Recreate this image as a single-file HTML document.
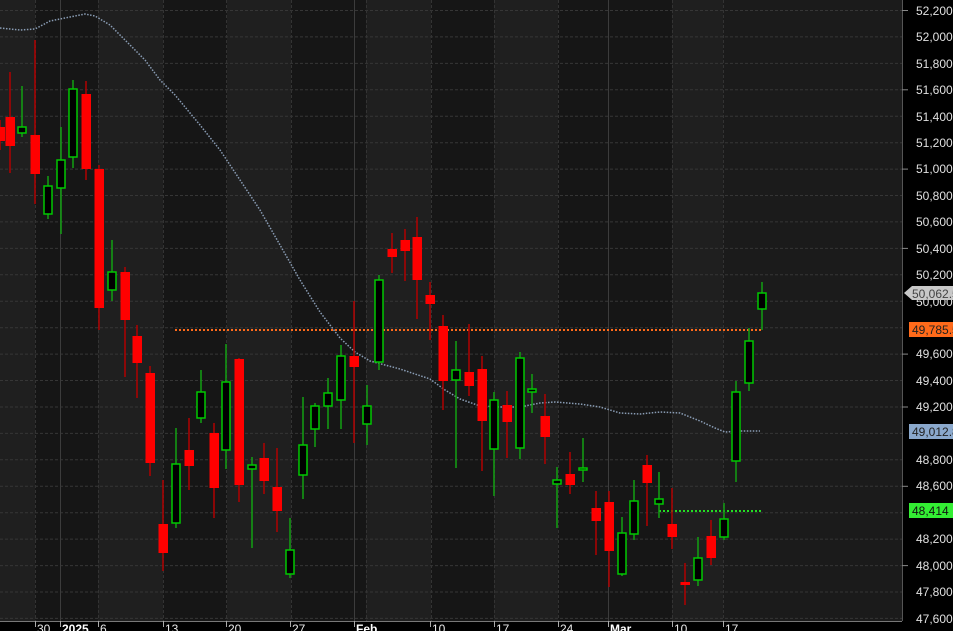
<!DOCTYPE html>
<html><head><meta charset="utf-8"><style>
html,body{margin:0;padding:0;background:#000;width:953px;height:631px;overflow:hidden}
svg{display:block}
text{font-family:"Liberation Sans",sans-serif}
</style></head><body>
<svg width="953" height="631" viewBox="0 0 953 631" xmlns="http://www.w3.org/2000/svg">
<rect x="0" y="0" width="953" height="631" fill="#000"/>
<!-- bands -->
<g>
<rect x="0" y="0" width="35" height="621" fill="#1f1f1f"/>
<rect x="35" y="0" width="63" height="621" fill="#161616"/>
<rect x="98" y="0" width="65" height="621" fill="#1f1f1f"/>
<rect x="163" y="0" width="64" height="621" fill="#161616"/>
<rect x="227" y="0" width="64" height="621" fill="#1f1f1f"/>
<rect x="291" y="0" width="75" height="621" fill="#161616"/>
<rect x="366" y="0" width="65" height="621" fill="#1f1f1f"/>
<rect x="431" y="0" width="63" height="621" fill="#161616"/>
<rect x="494" y="0" width="64" height="621" fill="#1f1f1f"/>
<rect x="558" y="0" width="114" height="621" fill="#161616"/>
<rect x="672" y="0" width="51" height="621" fill="#1f1f1f"/>
<rect x="723" y="0" width="179" height="621" fill="#1b1b1b"/>
</g>
<!-- horizontal grid -->
<g stroke="#363636" stroke-width="1" stroke-dasharray="3,2">
<line x1="0" y1="10.5" x2="902" y2="10.5"/><line x1="0" y1="36.9" x2="902" y2="36.9"/>
<line x1="0" y1="63.4" x2="902" y2="63.4"/><line x1="0" y1="89.8" x2="902" y2="89.8"/>
<line x1="0" y1="116.2" x2="902" y2="116.2"/><line x1="0" y1="142.7" x2="902" y2="142.7"/>
<line x1="0" y1="169.1" x2="902" y2="169.1"/><line x1="0" y1="195.5" x2="902" y2="195.5"/>
<line x1="0" y1="221.9" x2="902" y2="221.9"/><line x1="0" y1="248.4" x2="902" y2="248.4"/>
<line x1="0" y1="274.8" x2="902" y2="274.8"/><line x1="0" y1="301.2" x2="902" y2="301.2"/>
<line x1="0" y1="327.7" x2="902" y2="327.7"/><line x1="0" y1="354.1" x2="902" y2="354.1"/>
<line x1="0" y1="380.5" x2="902" y2="380.5"/><line x1="0" y1="407" x2="902" y2="407"/>
<line x1="0" y1="433.4" x2="902" y2="433.4"/><line x1="0" y1="459.8" x2="902" y2="459.8"/>
<line x1="0" y1="486.3" x2="902" y2="486.3"/><line x1="0" y1="512.7" x2="902" y2="512.7"/>
<line x1="0" y1="539.1" x2="902" y2="539.1"/><line x1="0" y1="565.6" x2="902" y2="565.6"/>
<line x1="0" y1="592" x2="902" y2="592"/><line x1="0" y1="618.4" x2="902" y2="618.4"/>
</g>
<g stroke="#333" stroke-width="1" stroke-dasharray="3,2">
<line x1="35.5" y1="0" x2="35.5" y2="621"/><line x1="98.5" y1="0" x2="98.5" y2="621"/>
<line x1="163.5" y1="0" x2="163.5" y2="621"/><line x1="226.5" y1="0" x2="226.5" y2="621"/>
<line x1="291.5" y1="0" x2="291.5" y2="621"/><line x1="366.5" y1="0" x2="366.5" y2="621"/>
<line x1="431.5" y1="0" x2="431.5" y2="621"/><line x1="494.5" y1="0" x2="494.5" y2="621"/>
<line x1="558.5" y1="0" x2="558.5" y2="621"/><line x1="672.5" y1="0" x2="672.5" y2="621"/>
<line x1="723.5" y1="0" x2="723.5" y2="621"/>
</g>
<g stroke="#3c3c3c" stroke-width="1">
<line x1="60.5" y1="0" x2="60.5" y2="621"/><line x1="354.5" y1="0" x2="354.5" y2="621"/>
<line x1="608.5" y1="0" x2="608.5" y2="621"/>
</g>
<!-- MA line -->
<polyline fill="none" stroke="#8a9db5" stroke-width="1.5" stroke-dasharray="1.5,1.5" points="0,28 20,30 35,29 50,21 70,17 85,14 95,16 110,25 125,40 145,60 160,80 175,95 200,125 220,150 240,180 260,210 280,245 300,280 320,312 340,338 355,352 370,361 400,369 430,379 445,390 460,399 480,406 500,407 520,407 540,403 555,402 580,404 600,407 620,413 640,414 660,412 680,413 700,421 715,428 725,432 740,431 760,431"/>
<!-- level lines -->
<line x1="175" y1="330" x2="762" y2="330" stroke="#ff6a1a" stroke-width="2" stroke-dasharray="2,2"/>
<line x1="659" y1="511" x2="762" y2="511" stroke="#22dd22" stroke-width="2" stroke-dasharray="2,2"/>
<!-- candles -->
<g id="c"></g>
<!-- axis -->
<rect x="902" y="0" width="51" height="631" fill="#000"/>
<line x1="902.5" y1="0" x2="902.5" y2="621" stroke="#555"/>
<rect x="0" y="621" width="953" height="10" fill="#000"/>
<line x1="0" y1="621.5" x2="902" y2="621.5" stroke="#777"/>
<g fill="#e0e0e0" font-size="12">
<text x="916" y="15">52,200</text><text x="916" y="41">52,000</text>
<text x="916" y="68">51,800</text><text x="916" y="94">51,600</text>
<text x="916" y="121">51,400</text><text x="916" y="147">51,200</text>
<text x="916" y="173">51,000</text><text x="916" y="200">50,800</text>
<text x="916" y="226">50,600</text><text x="916" y="253">50,400</text>
<text x="916" y="279">50,200</text><text x="916" y="306">50,000</text>
<text x="916" y="358">49,600</text><text x="916" y="385">49,400</text>
<text x="916" y="411">49,200</text><text x="916" y="464">48,800</text>
<text x="916" y="490">48,600</text><text x="916" y="543">48,200</text>
<text x="916" y="570">48,000</text><text x="916" y="596">47,800</text>
<text x="916" y="623">47,600</text>
</g>
<g stroke="#888"><line x1="902" y1="10.5" x2="908" y2="10.5"/><line x1="902" y1="89.8" x2="908" y2="89.8"/><line x1="902" y1="169.1" x2="908" y2="169.1"/><line x1="902" y1="248.4" x2="908" y2="248.4"/><line x1="902" y1="354.1" x2="908" y2="354.1"/><line x1="902" y1="407" x2="908" y2="407"/><line x1="902" y1="486.3" x2="908" y2="486.3"/><line x1="902" y1="565.6" x2="908" y2="565.6"/></g>
<polygon points="904,293 912,286 953,286 953,300 912,300" fill="#c8c8c8"/>
<text x="912" y="298" font-size="12" fill="#444">50,062.5</text>
<rect x="909" y="322" width="44" height="15" fill="#ff6a1a"/>
<text x="912" y="334" font-size="12" fill="#222">49,785.5</text>
<rect x="909" y="424" width="44" height="15" fill="#8aa8cc"/>
<text x="912" y="436" font-size="12" fill="#222">49,012.8</text>
<rect x="909" y="503" width="44" height="15" fill="#33ee33"/>
<text x="912" y="515" font-size="12" fill="#111">48,414</text>
<g stroke="#aaa"><line x1="35.5" y1="621" x2="35.5" y2="627"/><line x1="60.5" y1="621" x2="60.5" y2="627"/><line x1="98.5" y1="621" x2="98.5" y2="627"/><line x1="163.5" y1="621" x2="163.5" y2="627"/><line x1="226.5" y1="621" x2="226.5" y2="627"/><line x1="290.5" y1="621" x2="290.5" y2="627"/><line x1="354.5" y1="621" x2="354.5" y2="627"/><line x1="430.5" y1="621" x2="430.5" y2="627"/><line x1="494.5" y1="621" x2="494.5" y2="627"/><line x1="558.5" y1="621" x2="558.5" y2="627"/><line x1="608.5" y1="621" x2="608.5" y2="627"/><line x1="672.5" y1="621" x2="672.5" y2="627"/><line x1="723.5" y1="621" x2="723.5" y2="627"/></g>
<g fill="#e8e8e8" font-size="12">
<text x="37" y="633">30</text><text x="62" y="633" font-weight="bold" fill="#fff">2025</text>
<text x="100" y="633">6</text><text x="165" y="633">13</text><text x="228" y="633">20</text>
<text x="292" y="633">27</text><text x="356" y="633" font-weight="bold" fill="#fff">Feb</text>
<text x="432" y="633">10</text><text x="496" y="633">17</text><text x="560" y="633">24</text>
<text x="610" y="633" font-weight="bold" fill="#fff">Mar</text><text x="674" y="633">10</text><text x="725" y="633">17</text>
</g>
</svg>
<script>
var d=[
[0,127,141,120,150,0],[10,117,146,72,173,0],[22,127,133,86,137,1],[35,135,174,40,204,0],
[48,186,214,176,219,1],[61,160,188,127,234,1],[73,89,157,80,168,1],[86,94,169,81,180,0],
[99,169,308,165,330,0],[112,272,290,240,301,1],[125,272,320,267,377,0],[137,336,363,325,398,0],
[150,373,463,366,476,0],[163,524,553,480,571,0],[176,464,523,428,528,1],[189,450,466,418,490,0],
[201,392,418,370,423,1],[214,433,488,423,518,0],[226,382,450,344,469,1],[239,359,485,358,502,0],
[252,465,469,457,548,1],[264,458,481,443,494,0],[277,487,511,448,532,0],[290,550,574,518,578,1],
[303,445,475,397,499,1],[315,406,429,403,447,1],[328,393,406,378,429,1],[341,356,400,345,429,1],
[354,356,367,301,443,0],[367,406,424,385,445,1],[379,280,362,275,370,1],[392,249,257,233,273,0],
[405,240,251,229,281,0],[417,237,280,217,319,0],[430,295,304,282,340,0],[443,326,381,315,410,0],
[456,370,380,341,468,1],[469,372,386,324,396,0],[482,369,421,356,471,0],[494,400,449,392,496,1],
[507,405,422,391,458,0],[520,358,448,352,459,1],[532,389,392,374,413,1],[545,416,437,394,464,0],
[557,480,484,467,528,1],[570,474,485,452,494,0],[583,468,470,438,482,1],[596,508,521,491,555,0],
[609,502,551,491,587,0],[622,533,574,517,576,1],[634,501,534,480,540,1],[647,465,483,455,526,0],
[659,499,504,472,518,1],[672,524,537,488,549,0],[685,582,585,563,605,0],[698,558,580,537,586,1],
[711,536,558,520,565,0],[724,519,537,503,540,1],[736,392,461,381,482,1],[749,341,383,328,391,1],
[762,293,309,282,330,1]];
var g=document.getElementById('c'),s='';
d.forEach(function(c){var x=c[0],t=c[1],b=c[2],h=c[3],l=c[4];
if(c[5]){s+='<line x1="'+x+'" y1="'+h+'" x2="'+x+'" y2="'+l+'" stroke="#12a012" stroke-width="1.5"/>';
s+='<rect x="'+(x-4)+'" y="'+t+'" width="8" height="'+Math.max(b-t,2)+'" fill="#000" stroke="#00c800" stroke-width="1.5"/>';}
else{s+='<line x1="'+x+'" y1="'+h+'" x2="'+x+'" y2="'+l+'" stroke="#b00000" stroke-width="1.5"/>';
s+='<rect x="'+(x-4.5)+'" y="'+t+'" width="9.5" height="'+Math.max(b-t,3)+'" fill="#ff0000"/>';}});
g.innerHTML=s;
</script>
</body></html>
